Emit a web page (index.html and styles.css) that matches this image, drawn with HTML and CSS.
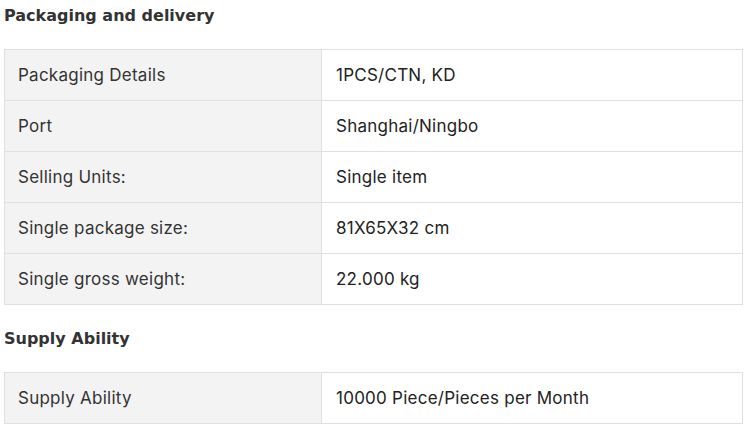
FILE: index.html
```html
<!DOCTYPE html>
<html lang="en">
<head>
<meta charset="utf-8">
<title>Packaging and delivery</title>
<link rel="stylesheet" href="styles.css">
</head>
<body>
<div class="page">
  <h3 class="title">Packaging and delivery</h3>
  <table class="attrs">
    <tr><td class="name">Packaging Details</td><td class="value">1PCS/CTN, KD</td></tr>
    <tr><td class="name">Port</td><td class="value">Shanghai/Ningbo</td></tr>
    <tr><td class="name">Selling Units:</td><td class="value">Single item</td></tr>
    <tr><td class="name">Single package size:</td><td class="value">81X65X32 cm</td></tr>
    <tr><td class="name">Single gross weight:</td><td class="value">22.000 kg</td></tr>
  </table>
  <h3 class="title title-next">Supply Ability</h3>
  <table class="attrs">
    <tr><td class="name">Supply Ability</td><td class="value">10000 Piece/Pieces per Month</td></tr>
  </table>
</div>
</body>
</html>
```
FILE: styles.css
```css
html, body {
  margin: 0;
  padding: 0;
  background: #ffffff;
}
body {
  font-family: Inter, "Liberation Sans", sans-serif;
  color: #222222;
}
.page {
  padding: 4px 0 0 4px;
  width: 739px;
}
.title {
  margin: 0 0 21px 0;
  font-family: "DejaVu Sans", Inter, sans-serif;
  font-size: 16px;
  line-height: 24px;
  font-weight: 700;
  color: #333333;
}
.title-next {
  margin-top: 22px;
}
.attrs {
  width: 739px;
  border-collapse: collapse;
  table-layout: fixed;
}
.attrs td {
  border: 1px solid #e0e0e0;
  height: 51px;
  padding: 0 0 0 13px;
  font-size: 17px;
  line-height: 20px;
  letter-spacing: 0.25px;
  vertical-align: middle;
  box-sizing: border-box;
}
.attrs td.name {
  width: 317px;
  background: #f3f3f3;
  color: #333333;
}
.attrs td.value {
  padding-left: 14px;
  color: #222222;
}
```
